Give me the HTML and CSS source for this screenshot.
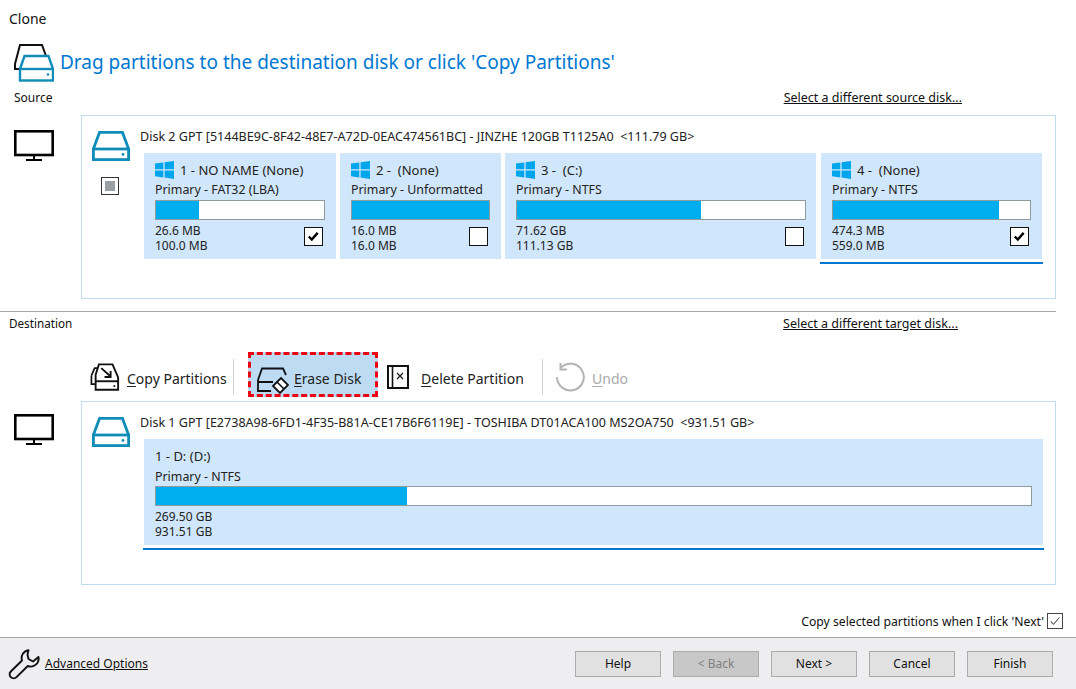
FILE: index.html
```html
<!DOCTYPE html>
<html lang="en">
<head>
<meta charset="utf-8">
<title>Clone</title>
<link rel="stylesheet" href="styles.css">
</head>
<body>
<svg class="defs" width="0" height="0" aria-hidden="true">
  <defs>
    <symbol id="disk" viewBox="0 0 38 30">
      <path d="M1.4 18 7.5 1.4H30.5L36.6 18" fill="none" stroke="currentColor" stroke-width="2.8"/>
      <rect x="1.4" y="18" width="35.2" height="10.6" fill="none" stroke="currentColor" stroke-width="2.8"/>
      <circle cx="31" cy="23.4" r="1.4" fill="currentColor"/>
    </symbol>
    <symbol id="monitor" viewBox="0 0 40 31">
      <rect x="1.3" y="1.3" width="37.4" height="23.7" fill="none" stroke="currentColor" stroke-width="2.6"/>
      <path d="M20 25v5M12 30h16" fill="none" stroke="currentColor" stroke-width="2"/>
    </symbol>
    <symbol id="win" viewBox="0 0 19 18">
      <path d="M0 2.6 8.3 1.5V8.2H0ZM9.6 1.3 19 0V8.2H9.6ZM0 9.6H8.3V16.4L0 15.3ZM9.6 9.6H19V18L9.6 16.6Z" fill="currentColor"/>
    </symbol>
    <symbol id="check" viewBox="0 0 18 18">
      <path d="M4 9 7.2 12.2 13.4 5.2" fill="none" stroke="currentColor" stroke-width="2.6"/>
    </symbol>
  </defs>
</svg>

<main class="wizard">
  <h1 class="window-title">Clone</h1>

  <div class="heading">
    <svg class="heading-icon" width="40" height="38" viewBox="0 0 40 38">
      <path d="M1 26V20L6 1H28L32 12" fill="none" stroke="#111" stroke-width="2"/>
      <path d="M1 25H6" fill="none" stroke="#111" stroke-width="2"/>
      <path d="M6 25 10.5 12H34.5L39 25" fill="#fff" stroke="#0f8db8" stroke-width="2.4"/>
      <rect x="6" y="25" width="33" height="11.5" fill="#fff" stroke="#0f8db8" stroke-width="2.4"/>
      <circle cx="34" cy="30.5" r="1.3" fill="#0f8db8"/>
    </svg>
    <span class="heading-text">Drag partitions to the destination disk or click 'Copy Partitions'</span>
  </div>

  <div class="section-head source-head">
    <span>Source</span>
    <a class="link">Select a different source disk...</a>
  </div>

  <section class="disk-row source-row">
    <svg class="monitor"><use href="#monitor"/></svg>
    <div class="panel source-panel">
      <div class="disk-side">
        <svg class="disk-icon"><use href="#disk"/></svg>
        <span class="box mixed"><i></i></span>
      </div>
      <div class="disk-main">
        <div class="disk-title">Disk 2 GPT [5144BE9C-8F42-48E7-A72D-0EAC474561BC] - JINZHE 120GB T1125A0 &nbsp;&lt;111.79 GB&gt;</div>
        <div class="partitions">
          <article class="partition p1">
            <div class="p-name"><svg class="win"><use href="#win"/></svg>1 - NO NAME (None)</div>
            <div class="p-type">Primary - FAT32 (LBA)</div>
            <div class="bar"><div class="fill" style="width:25.6%"></div></div>
            <div class="p-foot"><div>26.6 MB<br>100.0 MB</div><span class="box"><svg class="tick"><use href="#check"/></svg></span></div>
          </article>
          <article class="partition p2">
            <div class="p-name"><svg class="win"><use href="#win"/></svg>2 - &nbsp;(None)</div>
            <div class="p-type">Primary - Unformatted</div>
            <div class="bar"><div class="fill" style="width:100%"></div></div>
            <div class="p-foot"><div>16.0 MB<br>16.0 MB</div><span class="box"></span></div>
          </article>
          <article class="partition p3">
            <div class="p-name"><svg class="win"><use href="#win"/></svg>3 - &nbsp;(C:)</div>
            <div class="p-type">Primary - NTFS</div>
            <div class="bar"><div class="fill" style="width:64%"></div></div>
            <div class="p-foot"><div>71.62 GB<br>111.13 GB</div><span class="box"></span></div>
          </article>
          <article class="partition p4 selected">
            <div class="p-name"><svg class="win"><use href="#win"/></svg>4 - &nbsp;(None)</div>
            <div class="p-type">Primary - NTFS</div>
            <div class="bar"><div class="fill" style="width:84.4%"></div></div>
            <div class="p-foot"><div>474.3 MB<br>559.0 MB</div><span class="box"><svg class="tick"><use href="#check"/></svg></span></div>
          </article>
        </div>
      </div>
    </div>
  </section>

  <hr class="divider">

  <div class="section-head dest-head">
    <span class="dest-label">Destination</span>
    <a class="link">Select a different target disk...</a>
  </div>

  <div class="toolbar">
    <button class="tool copy">
      <svg width="30" height="31" viewBox="0 0 32 32">
        <path d="M1.5 14 5 6H10M1.5 14V23H6" fill="none" stroke="#111" stroke-width="1.8"/>
        <path d="M6 13 9.5 2H24L30 16V29H6Z" fill="#fff" stroke="#111" stroke-width="2"/>
        <path d="M6 20H30" stroke="#111" stroke-width="2"/>
        <path d="M12 6 22 15M22 9V15.5H15.5" fill="none" stroke="#111" stroke-width="2"/>
        <circle cx="26" cy="25" r="1.1" fill="#111"/>
      </svg>
      <span><u>C</u>opy Partitions</span>
    </button>
    <span class="tool-sep first"></span>
    <button class="tool erase">
      <svg width="32" height="28" viewBox="0 0 32 28">
        <path d="M1 14 5 2.5H26L29 9" fill="none" stroke="#111" stroke-width="1.8"/>
        <path d="M1 14V25H14M1 16H16" fill="none" stroke="#111" stroke-width="1.8"/>
        <path d="M16 20 24 12 31 19 23 27Z" fill="#fff" stroke="#111" stroke-width="1.8"/>
        <path d="M20 16 27 23" stroke="#111" stroke-width="1.6"/>
      </svg>
      <span><u>E</u>rase Disk</span>
    </button>
    <button class="tool delete">
      <svg width="22" height="24" viewBox="0 0 22 24">
        <rect x="1" y="1" width="20" height="22" fill="none" stroke="#111" stroke-width="2"/>
        <path d="M5.5 1V23" stroke="#111" stroke-width="1.6"/>
        <path d="M10 8 16 14M16 8 10 14" stroke="#111" stroke-width="1.2"/>
      </svg>
      <span><u>D</u>elete Partition</span>
    </button>
    <span class="tool-sep second"></span>
    <button class="tool undo">
      <svg width="30" height="30" viewBox="0 0 30 30">
        <path d="M6 5.5A13.4 13.4 0 1 1 2 15" fill="none" stroke="#b4b4b4" stroke-width="2"/>
        <path d="M5.5 1V7.5H12" fill="none" stroke="#b4b4b4" stroke-width="2"/>
      </svg>
      <span><u>U</u>ndo</span>
    </button>
  </div>

  <section class="disk-row dest-row">
    <svg class="monitor"><use href="#monitor"/></svg>
    <div class="panel dest-panel">
      <div class="disk-side">
        <svg class="disk-icon"><use href="#disk"/></svg>
      </div>
      <div class="disk-main">
        <div class="disk-title">Disk 1 GPT [E2738A98-6FD1-4F35-B81A-CE17B6F6119E] - TOSHIBA DT01ACA100 MS2OA750 &nbsp;&lt;931.51 GB&gt;</div>
        <div class="partitions">
          <article class="partition p-full selected">
            <div class="p-name plain">1 - D: (D:)</div>
            <div class="p-type">Primary - NTFS</div>
            <div class="bar"><div class="fill" style="width:28.7%"></div></div>
            <div class="p-foot"><div>269.50 GB<br>931.51 GB</div></div>
          </article>
        </div>
      </div>
    </div>
  </section>

  <label class="copy-option">
    <span>Copy selected partitions when I click 'Next'</span>
    <span class="box small"><svg class="tick thin" viewBox="0 0 16 16"><path d="M3 8.5 6.3 11.8 13 4" fill="none" stroke="#555" stroke-width="1.2"/></svg></span>
  </label>
</main>

<footer class="footer">
  <a class="advanced">
    <svg width="32" height="32" viewBox="0 0 32 32">
      <path d="M20.5 2.2A8 8 0 0 0 14 12.5L2.8 23.5A4 4 0 0 0 8.5 29.2L19.8 18A8 8 0 0 0 30.5 9L25 13.5 20.5 11 19.5 6.5Z" fill="none" stroke="#111" stroke-width="1.9" stroke-linejoin="round"/>
    </svg>
    <span class="link">Advanced Options</span>
  </a>
  <div class="buttons">
    <button class="btn">Help</button>
    <button class="btn disabled">&lt; Back</button>
    <button class="btn">Next &gt;</button>
    <button class="btn">Cancel</button>
    <button class="btn">Finish</button>
  </div>
</footer>
</body>
</html>
```
FILE: styles.css
```css
* { box-sizing: border-box; }
html, body { margin: 0; padding: 0; height: 100%; }
body {
  width: 1076px;
  height: 689px;
  overflow: hidden;
  background: #fff;
  color: #111;
  font: 12px/15px "Noto Sans", "Open Sans", sans-serif;
  display: flex;
  flex-direction: column;
}
.defs { position: absolute; }
.wizard { flex: 1; display: flex; flex-direction: column; }

.window-title {
  margin: 0;
  padding: 10px 0 0 9px;
  height: 44px;
  font-size: 14px;
  line-height: 17px;
  font-weight: 400;
}
.heading { display: flex; align-items: flex-start; padding-left: 14px; height: 45px; }
.heading-icon { flex: none; }
.heading-text {
  margin: 5px 0 0 6px;
  font-size: 19px;
  line-height: 26px;
  color: #0078d2;
  white-space: nowrap;
}
.section-head {
  display: flex;
  width: 1056px;
  justify-content: space-between;
  align-items: center;
  white-space: nowrap;
}
.source-head { padding: 0 94px 0 14px; height: 17px; margin-bottom: 9px; }
.dest-head { padding: 0 98px 0 9px; height: 23px; }
.dest-label { font-size: 11.7px; }
.link { color: #111; text-decoration: underline; font-size: 12.5px; }
.advanced .link { font-size: 12px; }

.disk-row { display: flex; padding-left: 14px; }
.monitor { width: 40px; height: 31px; color: #000; flex: none; margin-right: 27px; }
.source-row .monitor { margin-top: 15px; }
.dest-row .monitor { margin-top: 13px; }
.panel {
  width: 975px;
  border: 1px solid #bfdbee;
  display: flex;
}
.source-panel { height: 184px; }
.dest-panel { height: 184px; }
.disk-side {
  width: 62px;
  flex: none;
  display: flex;
  flex-direction: column;
  align-items: center;
  padding: 15px 4px 0 0;
  gap: 16px;
}
.disk-icon { width: 38px; height: 30px; color: #0f8db8; flex: none; }
.disk-main { flex: 1; }
.disk-title {
  height: 37px;
  padding-top: 13px;
  margin-left: -4px;
  white-space: nowrap;
  font-size: 12.55px;
  line-height: 15px;
  color: #222;
}

.partitions { display: flex; gap: 4px; }
.partition {
  height: 106px;
  background: #d0e6fb;
  padding: 8px 11px 0;
  position: relative;
  flex: none;
  color: #222;
}
.p1 { width: 192px; }
.p2 { width: 161px; }
.p3 { width: 311px; padding-right: 10px; }
.p4 { width: 221px; margin-left: 1px; }
.p-full { width: 899px; }
.selected::after {
  content: "";
  position: absolute;
  left: -1px;
  right: -1px;
  bottom: -5px;
  height: 2px;
  background: #0078d0;
}
.p-name { display: flex; align-items: center; height: 18px; gap: 6px; white-space: pre; font-size: 13px; }
.p-name.plain { height: 19px; }
.win { width: 19px; height: 18px; color: #00a6ec; flex: none; }
.p-type { height: 20px; padding-top: 3px; font-size: 12.4px; }
.p-full .p-type { height: 19px; }
.bar {
  height: 20px;
  margin-top: 1px;
  background: #fff;
  border: 1px solid #8f9a9f;
}
.fill { height: 100%; background: #00adef; }
.p-foot {
  display: flex;
  justify-content: space-between;
  padding-top: 3px;
  line-height: 15px;
}
.p-foot .box { margin-top: 4px; margin-right: 2px; }
.box {
  width: 19px;
  height: 19px;
  background: #fff;
  border: 1px solid #111;
  display: flex;
  align-items: center;
  justify-content: center;
  flex: none;
}
.mixed { width: 18px; height: 18px; border-color: #333; margin-right: 2px; }
.mixed i { width: 10px; height: 10px; background: #9aa1a5; }
.tick { width: 17px; height: 17px; color: #000; }

.divider { border: 0; border-top: 1px solid #a8a8a8; margin: 12px 0 0; width: 1056px; height: 1px; }

.toolbar { display: flex; align-items: center; height: 49px; margin-top: 17px; padding-left: 90px; }
.tool {
  display: flex;
  align-items: center;
  height: 45px;
  padding: 0;
  border: 0;
  background: transparent;
  font: inherit;
  font-size: 14px;
  color: #222;
  white-space: nowrap;
}
.tool span { margin-top: 3px; }
.tool u { text-decoration-thickness: 1px; text-underline-offset: 2px; }
.copy { gap: 7px; width: 143px; }
.copy svg { margin-top: 2px; }
.tool-sep { width: 1px; height: 36px; background: #d4d4d4; flex: none; }
.tool-sep.first { margin-right: 14px; }
.erase {
  width: 130px;
  align-self: flex-start;
  background: #bddbf3;
  border: 3px dashed #ee0014;
  padding-left: 6px;
  gap: 5px;
}
.erase svg { margin-top: 11px; }
.erase span { margin-top: 7px; }
.delete { width: 164px; padding-left: 9px; gap: 12px; }
.tool-sep.second { margin-right: 12px; }
.undo { gap: 7px; color: #aaa; }

.copy-option {
  display: flex;
  justify-content: flex-end;
  align-items: center;
  gap: 3px;
  padding-right: 13px;
  height: 20px;
  margin-top: 26px;
  font-size: 12.2px;
}
.box.small { width: 16px; height: 16px; border-color: #444; }
.tick.thin { width: 14px; height: 14px; }

.footer {
  height: 52px;
  flex: none;
  background: #eeeef0;
  border-top: 1px solid #a8a8a8;
  display: flex;
  align-items: center;
  justify-content: space-between;
  padding: 0 23px 0 8px;
}
.advanced { display: flex; align-items: center; gap: 5px; }
.buttons { display: flex; gap: 12px; }
.btn {
  width: 86px;
  height: 26px;
  padding: 0;
  border: 1px solid #acacac;
  background: #e1e1e1;
  color: #111;
  font: inherit;
}
.btn.disabled { background: #c8c8c8; color: #808080; }
```
